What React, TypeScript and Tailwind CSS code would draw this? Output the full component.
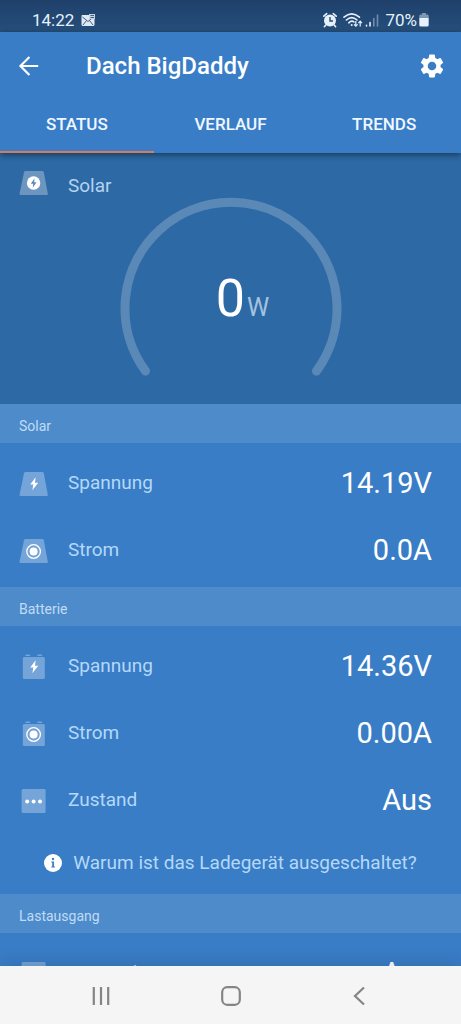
import type { ReactNode } from 'react';

type Shape = 'panel' | 'battery' | 'box';
type Mark = 'bolt' | 'power' | 'target' | 'dots';

interface RowProps {
    shape: Shape;
    mark: Mark;
    label: string;
    value: string;
}

const BOLT = 'M15.6 7.2 10.2 14.6H13.3L12.4 20.2 18.2 12.8H15Z';

const RowIcon = ({ shape, mark }: { shape: Shape; mark: Mark }) => (
    <svg className="h-7 w-7 shrink-0 overflow-visible" viewBox="0 0 28 28" aria-hidden="true">
        <g fill="#fff" fillOpacity="0.3">
            {shape === 'panel' && (
                <path d="M5.6 2H22.2Q23.5 2 23.8 3.2L27.8 24.4Q28.1 26 26.6 26H.8Q-.7 26 -.4 24.4L4 3.2Q4.3 2 5.6 2Z" />
            )}
            {shape === 'battery' && (
                <>
                    <rect x="2.8" y="4" width="22" height="22" rx="1.5" />
                    <path d="M5 3 6 1.4H9.5L10.5 3ZM17 3 18 1.4H21.5L22.5 3Z" />
                </>
            )}
            {shape === 'box' && <rect x="1.6" y="2" width="24" height="24" rx="1.5" />}
        </g>
        {mark === 'bolt' && <path d={BOLT} fill="#fff" />}
        {mark === 'power' && (
            <>
                <circle cx="13.6" cy="14" r="6.7" fill="#fff" />
                <path d="M14.6 9.2 10.8 14.8H13.2L12.7 18.8 16.5 13.2H14.1Z" fill="#5c88b8" />
            </>
        )}
        {mark === 'target' && (
            <>
                <circle cx="13.6" cy="14.5" r="6.8" fill="none" stroke="#fff" strokeWidth="1.3" />
                <circle cx="13.6" cy="14.5" r="4" fill="#fff" />
            </>
        )}
        {mark === 'dots' && (
            <g fill="#fff">
                <circle cx="7.2" cy="14.5" r="2" />
                <circle cx="13.6" cy="14.5" r="2" />
                <circle cx="20" cy="14.5" r="2" />
            </g>
        )}
    </svg>
);

const StatusBar = () => (
    <div className="flex h-8 shrink-0 items-center bg-linear-to-b from-[#1f406b] to-[#254f7b] pt-2 pr-8 pl-8 text-[#e6f1fb]">
        <span className="text-[17px] leading-6">14:22</span>
        <svg className="ml-1.5 h-3.5 w-4" viewBox="0 0 16 14" aria-hidden="true">
            <path d="M2 2H14.5V11.5Q14.5 13 13 13H3Q1.5 13 1.5 11.5V3Z" fill="#dfe9f3" />
            <path d="M2.5 4 8 8.5 13.5 4M3 12 6.5 7.5M13 12 9.5 7.5" fill="none" stroke="#3f6087" />
            <path d="M9 1H15V6H9Z" fill="#c3d4e5" />
            <path d="M10.5 2.5H14M10.5 4.5H14" stroke="#3f6087" />
        </svg>
        <svg className="ml-auto h-4 w-3.5" viewBox="0 0 14 16" aria-hidden="true">
            <circle cx="7" cy="8.5" r="6" fill="#e6f1fb" />
            <path d="M.8 4.2 3.7 1.6M13.2 4.2 10.3 1.6M2.8 13 1.4 14.7M11.2 13 12.6 14.7" stroke="#e6f1fb" strokeWidth="1.6" strokeLinecap="round" />
            <path d="M7 5V9H10" fill="none" stroke="#254b76" strokeWidth="1.4" />
        </svg>
        <svg className="ml-1.5 h-4 w-5" viewBox="0 0 20 16" fill="none" stroke="#e6f1fb" aria-hidden="true">
            <path d="M1 5.2Q8.7-1.6 16.4 5.2M3.4 8Q8.7 3.2 14 8M5.8 10.8Q8.7 8 11 10" strokeWidth="1.6" strokeLinecap="round" />
            <circle cx="8.7" cy="13" r="1" fill="#e6f1fb" stroke="none" />
            <path d="M12.8 9V14M11 12.3 12.8 14.2 14.6 12.3M17.2 14.5V9.4M15.4 11.2 17.2 9.2 19 11.2" strokeWidth="1.2" />
        </svg>
        <svg className="ml-0.5 h-4 w-3.5" viewBox="0 0 14 16" strokeWidth="1.6" strokeLinecap="round" aria-hidden="true">
            <path d="M1.5 13.2V14M5 10.5V14" stroke="#e6f1fb" />
            <path d="M8.8 6.5V14M12.5 3V14" stroke="#e6f1fb" strokeOpacity="0.4" />
        </svg>
        <span className="ml-1.5 text-[17px] leading-6">70%</span>
        <svg className="ml-0.5 h-4 w-2.5" viewBox="0 0 10 16" aria-hidden="true">
            <path d="M3 1H7V2.5H8.5Q9.7 2.5 9.7 4V6H.3V4Q.3 2.5 1.5 2.5H3Z" fill="#7d98b5" />
            <path d="M.3 6H9.7V13Q9.7 14.5 8.2 14.5H1.8Q.3 14.5 .3 13Z" fill="#e6f1fb" />
        </svg>
    </div>
);

const TABS = ['STATUS', 'VERLAUF', 'TRENDS'];

const Header = () => (
    <header className="relative z-10 shrink-0 bg-[#397dc7] shadow-[0_2px_6px_rgba(0,0,0,0.45)]">
        <div className="flex h-[68px] items-center pr-4 pl-4">
            <button type="button" aria-label="Zurück">
                <svg className="h-[26px] w-[26px]" viewBox="0 0 24 24" fill="none" stroke="#fff" strokeWidth="2" aria-hidden="true">
                    <path d="M20.5 12H4.5M12.4 3.7 4.1 12 12.4 20.3" />
                </svg>
            </button>
            <h1 className="ml-11 text-2xl font-medium text-white">Dach BigDaddy</h1>
            <button type="button" className="ml-auto" aria-label="Einstellungen">
                <svg className="h-[26px] w-[26px] scale-110" viewBox="0 0 24 24" fill="#fff" aria-hidden="true">
                    <path d="M19.14 12.94c.04-.3.06-.61.06-.94 0-.32-.02-.64-.07-.94l2.03-1.58a.49.49 0 0 0 .12-.61l-1.92-3.32a.488.488 0 0 0-.59-.22l-2.39.96c-.5-.38-1.03-.7-1.62-.94l-.36-2.54a.484.484 0 0 0-.48-.41h-3.84c-.24 0-.43.17-.47.41l-.36 2.54c-.59.24-1.13.57-1.62.94l-2.39-.96c-.22-.08-.47 0-.59.22L2.74 8.87c-.12.21-.08.47.12.61l2.03 1.58c-.05.3-.09.63-.09.94s.02.64.07.94l-2.03 1.58a.49.49 0 0 0-.12.61l1.92 3.32c.12.22.37.29.59.22l2.39-.96c.5.38 1.03.7 1.62.94l.36 2.54c.05.24.24.41.48.41h3.84c.24 0 .44-.17.47-.41l.36-2.54c.59-.24 1.13-.56 1.62-.94l2.39.96c.22.08.47 0 .59-.22l1.92-3.32c.12-.22.07-.47-.12-.61l-2.01-1.58zM12 15.6c-1.98 0-3.6-1.62-3.6-3.6s1.62-3.6 3.6-3.6 3.6 1.62 3.6 3.6-1.62 3.6-3.6 3.6z" />
                </svg>
            </button>
        </div>
        <nav className="grid h-[53px] grid-cols-3">
            {TABS.map((tab, i) => (
                <button
                    key={tab}
                    type="button"
                    className={`border-b-2 pb-px text-[17px] font-medium text-[#f0f7ff] ${i === 0 ? 'border-[#d57d5b]' : 'border-transparent'}`}
                >
                    {tab}
                </button>
            ))}
        </nav>
    </header>
);

const Gauge = () => (
    <section className="grid bg-[#2d69a4]">
        <div className="col-start-1 row-start-1 flex items-start gap-5 px-5 pt-4">
            <RowIcon shape="panel" mark="power" />
            <h2 className="pt-[3px] text-[19px] leading-7 text-[#b4d3f0]">Solar</h2>
        </div>
        <svg className="col-start-1 row-start-1 mx-auto mt-11 mb-[25px] h-[182px] w-[222px]" viewBox="0 0 222 182" aria-hidden="true">
            <path d="M25.5 174A106 106 0 1 1 196.5 174" fill="none" stroke="#5b89b7" strokeWidth="9" strokeLinecap="round" />
        </svg>
        <p className="col-start-1 row-start-1 mt-28 flex items-baseline justify-center gap-0.5 pl-6 text-[52px] leading-[68px] text-white">
            0<span className="text-[25px] text-[#a3c2e0]">W</span>
        </p>
    </section>
);

const Section = ({ title, children }: { title: string; children: ReactNode }) => (
    <section>
        <h2 className="bg-[#4d8bcb] pt-3 pb-1.5 pl-[19px] text-sm leading-[21px] text-[#c0dcf5]">{title}</h2>
        <div className="pt-[7px] pb-[3px]">{children}</div>
    </section>
);

const Row = ({ shape, mark, label, value }: RowProps) => (
    <div className="flex h-[67px] items-center gap-5 pr-[29px] pl-5">
        <RowIcon shape={shape} mark={mark} />
        <span className="text-[19px] text-[#b4d8f8]">{label}</span>
        <span className="ml-auto text-[29px] text-white">{value}</span>
    </div>
);

const SystemNav = () => (
    <nav className="z-10 grid h-[58px] shrink-0 grid-cols-[1fr_56px_1fr] items-center bg-[#f5f5f5] pt-0.5 text-[#858585] shadow-[0_-4px_16px_rgba(0,0,0,0.12)]">
        <button type="button" className="mx-auto" aria-label="Letzte Apps">
            <svg className="h-5 w-5" viewBox="0 0 20 20" stroke="currentColor" strokeWidth="2.2" aria-hidden="true">
                <path d="M2.8 1V19M10 1V19M17.2 1V19" />
            </svg>
        </button>
        <button type="button" className="mx-auto" aria-label="Startseite">
            <svg className="h-5 w-5" viewBox="0 0 20 20" fill="none" stroke="currentColor" strokeWidth="2.2" aria-hidden="true">
                <rect x="1.2" y="1.2" width="17.6" height="17.6" rx="5" />
            </svg>
        </button>
        <button type="button" className="mx-auto" aria-label="Zurück">
            <svg className="h-5 w-5" viewBox="0 0 20 20" fill="none" stroke="currentColor" strokeWidth="2.2" aria-hidden="true">
                <path d="M14 1.5 5 10 14 18.5" />
            </svg>
        </button>
    </nav>
);

export default function App() {
    return (
        <div className="flex h-screen flex-col bg-[#397dc7] font-[Roboto,sans-serif]">
            <StatusBar />
            <Header />
            <main className="min-h-0 flex-1 overflow-hidden">
                <Gauge />
                <Section title="Solar">
                    <Row shape="panel" mark="bolt" label="Spannung" value="14.19V" />
                    <Row shape="panel" mark="target" label="Strom" value="0.0A" />
                </Section>
                <Section title="Batterie">
                    <Row shape="battery" mark="bolt" label="Spannung" value="14.36V" />
                    <Row shape="battery" mark="target" label="Strom" value="0.00A" />
                    <Row shape="box" mark="dots" label="Zustand" value="Aus" />
                    <a href="#ladegeraet" className="flex items-center justify-center gap-[11px] pt-[15px] pb-3.5 text-[19px] leading-7 text-[#b4d8f8]">
                        <svg className="h-[18px] w-[18px]" viewBox="0 0 18 18" aria-hidden="true">
                            <circle cx="9" cy="9" r="9" fill="#fff" />
                            <path d="M7.3 7.4H10V12.4H11V13.4H7.3V12.4H8.2V8.4H7.3Z" fill="#397dc7" />
                            <circle cx="9" cy="5" r="1.2" fill="#397dc7" />
                        </svg>
                        Warum ist das Ladegerät ausgeschaltet?
                    </a>
                </Section>
                <Section title="Lastausgang">
                    <Row shape="box" mark="dots" label="Zustand" value="Aus" />
                </Section>
            </main>
            <SystemNav />
        </div>
    );
}
